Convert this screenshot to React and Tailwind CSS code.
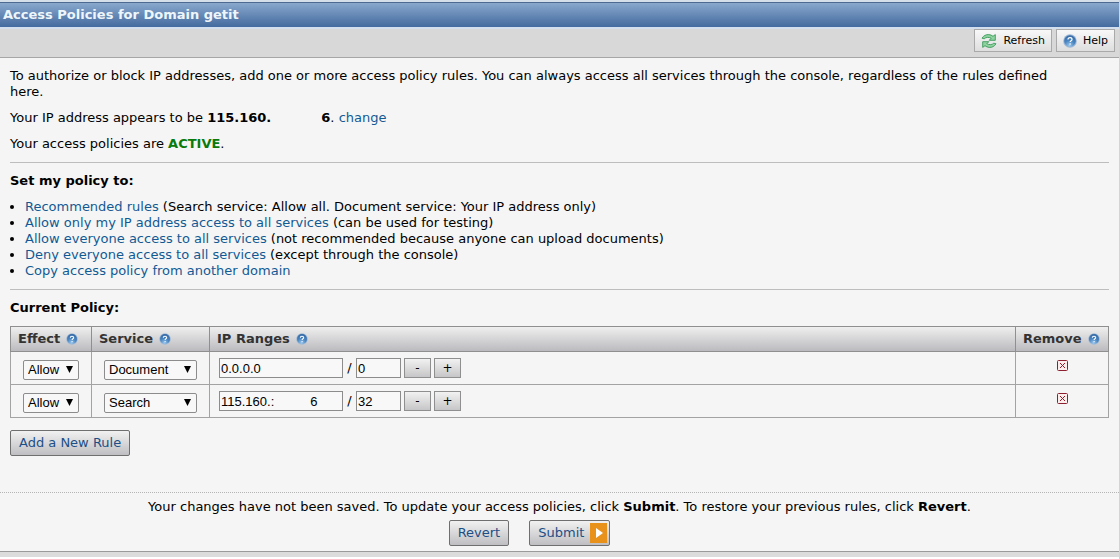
import React, { useId, useState } from 'react';

const policies = [
  { label: 'Recommended rules', note: '(Search service: Allow all. Document service: Your IP address only)' },
  { label: 'Allow only my IP address access to all services', note: '(can be used for testing)' },
  { label: 'Allow everyone access to all services', note: '(not recommended because anyone can upload documents)' },
  { label: 'Deny everyone access to all services', note: '(except through the console)' },
  { label: 'Copy access policy from another domain', note: '' },
];

const initialRules = [
  { id: 1, effect: 'Allow', service: 'Document', ip: '0.0.0.0', mask: '0' },
  { id: 2, effect: 'Allow', service: 'Search', ip: '115.160.:          6', mask: '32' },
];

function HelpIcon({ className }) {
  const id = useId();
  return (
    <svg viewBox="0 0 14 14" className={className} aria-hidden="true">
      <defs>
        <radialGradient id={id} cx="0.45" cy="0.9" r="0.9">
          <stop offset="0" stopColor="#9cc8ee" />
          <stop offset="0.5" stopColor="#4a86c2" />
          <stop offset="1" stopColor="#3568a3" />
        </radialGradient>
      </defs>
      <circle cx="7" cy="7" r="6.8" fill="#9fb9d6" />
      <circle cx="7" cy="7" r="5.8" fill={`url(#${id})`} />
      <path d="M5 5.6C5 4.4 5.9 3.7 7 3.7s2 .7 2 1.7c0 1.3-1.9 1.4-1.9 2.7" fill="none" stroke="#fff" strokeWidth="1.2" />
      <circle cx="7.1" cy="10" r="0.8" fill="#fff" />
    </svg>
  );
}

function RefreshIcon() {
  return (
    <svg viewBox="0 0 16 16" className="h-4 w-4" aria-hidden="true">
      <g fill="#8fd3a0" stroke="#3c9a5a" strokeWidth="0.9" strokeLinejoin="round">
        <path d="M1 5.200C2.600 2.600 5 1.400 7.800 1.600c1.600.1 3 .7 4.200 1.700L14.300 1.600v5.700H8.200l2-2C8 4 5 4 3.200 5.800z" />
        <path d="M15 10.800c-1.600 2.600-4 3.800-6.800 3.600-1.600-.1-3-.7-4.200-1.700L1.700 14.400V8.700h6.100l-2 2c2.200 1.300 5.200 1.300 7-.5z" />
      </g>
    </svg>
  );
}

function SelectBox({ label, value, options, className }) {
  return (
    <span className={`relative block ${className}`}>
      <select
        aria-label={label}
        defaultValue={value}
        className="block h-5 w-full appearance-none rounded-xs border border-[#8c8c8c] bg-[#f8f8f8] pl-1 font-['Liberation_Sans',Arial,sans-serif] text-[13px] leading-4 text-black"
      >
        {options.map((option) => (
          <option key={option}>{option}</option>
        ))}
      </select>
      <svg viewBox="0 0 7 7" className="pointer-events-none absolute top-1.5 right-1.5 h-[7px] w-[7px]" aria-hidden="true">
        <path d="M0 0h7L3.500 7z" fill="#000" />
      </svg>
    </span>
  );
}

function HeadCell({ children, className }) {
  return (
    <th scope="col" className={`h-[25px] border border-[#8f8f8f] px-[7px] text-left font-bold whitespace-nowrap text-[#333] ${className}`}>
      <span className="flex items-center gap-1.5">
        {children}
        <HelpIcon className="h-3 w-3" />
      </span>
    </th>
  );
}

const inputStyle =
  "h-5 border border-[#8c8c8c] bg-[#f8f8f8] px-px font-['Liberation_Sans',Arial,sans-serif] text-[13px] text-black";
const smallButton =
  'h-5 border border-[#8f8f8f] bg-linear-to-b from-[#f2f2f2] to-[#c6c6c8] text-xs leading-4 text-black';
const toolButton =
  'flex h-[23px] items-center border border-[#a9a9a9] bg-linear-to-b from-[#f8f8f8] to-[#dedede] text-[11px] text-black';
const bigButton =
  'flex h-[26px] items-center rounded-xs border border-[#6f6f6f] bg-linear-to-b from-[#f1f1f1] to-[#bfbfc3] text-[#1c4f86]';

function RuleRow({ rule, onRemove }) {
  return (
    <tr>
      <td className="h-[33px] border border-[#a3a3a3] px-3 pt-1">
        <SelectBox label="Effect" value={rule.effect} options={['Allow', 'Deny']} className="w-14" />
      </td>
      <td className="border border-[#a3a3a3] px-3 pt-1">
        <SelectBox label="Service" value={rule.service} options={['Document', 'Search']} className="w-[93px]" />
      </td>
      <td className="border border-[#a3a3a3] px-[9px]">
        <div className="flex items-center">
          <input type="text" aria-label="IP address" defaultValue={rule.ip} className={`w-[124px] ${inputStyle}`} />
          <span className="w-[13px] text-center">/</span>
          <input type="text" aria-label="Prefix length" defaultValue={rule.mask} className={`w-[45px] ${inputStyle}`} />
          <button type="button" className={`ml-[3px] w-[27px] ${smallButton}`}>-</button>
          <button type="button" className={`ml-[3px] w-[27px] ${smallButton}`}>+</button>
        </div>
      </td>
      <td className="border border-[#a3a3a3] pb-1.5">
        <button type="button" aria-label="Remove rule" onClick={onRemove} className="mx-auto block">
          <svg viewBox="0 0 11 11" className="h-[11px] w-[11px]">
            <rect x="0.5" y="0.5" width="10" height="10" rx="1" fill="#fdeeee" stroke="#8c2030" />
            <path d="M3 3l5 5M8 3l-5 5" stroke="#a01828" strokeWidth="1" />
          </svg>
        </button>
      </td>
    </tr>
  );
}

export default function App() {
  const [rules, setRules] = useState(initialRules);

  const addRule = () =>
    setRules([...rules, { id: Date.now(), effect: 'Allow', service: 'Document', ip: '', mask: '32' }]);

  return (
    <div className="bg-[#f5f5f5] font-['DejaVu_Sans',Verdana,sans-serif] text-[13px] leading-4 text-black">
      {/* Title bar */}
      <header className="border-t-2 border-[#d5dfe9]">
        <h1 className="flex h-[25px] items-center border-t border-[#4d6a92] bg-linear-to-b from-[#89a8cc] to-[#446b9f] px-[3px] font-bold text-[#eef6fb]">
          Access Policies for Domain getit
        </h1>
        <div className="flex items-center justify-end gap-1 border-t-2 border-b border-t-[#d3dfef] border-b-[#a6a6a6] bg-[#d8d8d8] px-1 pb-[5px]">
          <button type="button" className={`${toolButton} gap-1.5 px-1.5`}>
            <RefreshIcon />
            Refresh
          </button>
          <button type="button" className={`${toolButton} gap-1.5 px-1.5`}>
            <HelpIcon className="h-3.5 w-3.5" />
            Help
          </button>
        </div>
      </header>

      <main className="px-2.5 pt-2.5">
        <p className="pr-8">
          To authorize or block IP addresses, add one or more access policy rules. You can always access all services
          through the console, regardless of the rules defined here.
        </p>
        <p className="mt-2.5">
          Your IP address appears to be <b>115.160.<span className="inline-block w-[50px]" />6</b>.{' '}
          <a href="#change" className="text-[#125a94]">change</a>
        </p>
        <p className="mt-2.5">
          Your access policies are <b className="text-[#0a7a0a]">ACTIVE</b>.
        </p>

        <hr className="mt-2.5 border-[#bdbdbd]" />

        <h2 className="mt-2.5 font-bold">Set my policy to:</h2>
        <ul className="mt-2.5 list-disc pl-[15px]">
          {policies.map(({ label, note }) => (
            <li key={label}>
              <a href="#policy" className="text-[#125a94]">{label}</a> {note}
            </li>
          ))}
        </ul>

        <hr className="mt-2.5 border-[#bdbdbd]" />

        <h2 className="mt-2.5 font-bold">Current Policy:</h2>
        <table className="mt-2.5 w-full border-collapse">
          <thead>
            <tr className="bg-linear-to-b from-[#efefef] to-[#b9b9bd]">
              <HeadCell className="w-[81px]">Effect</HeadCell>
              <HeadCell className="w-[118px]">Service</HeadCell>
              <HeadCell className="w-auto">IP Ranges</HeadCell>
              <HeadCell className="w-[93px]">Remove</HeadCell>
            </tr>
          </thead>
          <tbody>
            {rules.map((rule) => (
              <RuleRow key={rule.id} rule={rule} onRemove={() => setRules(rules.filter((r) => r.id !== rule.id))} />
            ))}
          </tbody>
        </table>

        <button type="button" onClick={addRule} className={`mt-3 px-2 ${bigButton}`}>
          Add a New Rule
        </button>
      </main>

      {/* Save / revert bar */}
      <footer className="mt-9 border-t border-b border-t-[#b5b5b5] border-b-[#9a9a9a] pt-1.5 pb-[5px] [border-top-style:dotted]">
        <p className="text-center">
          Your changes have not been saved. To update your access policies, click <b>Submit</b>. To restore your
          previous rules, click <b>Revert</b>.
        </p>
        <div className="mt-[5px] flex justify-center gap-5 pr-15">
          <button type="button" className={`px-2 ${bigButton}`}>Revert</button>
          <button type="button" className={`gap-1.5 pr-0.5 pl-2 ${bigButton}`}>
            Submit
            <svg viewBox="0 0 17 20" className="h-5 w-[17px]" aria-hidden="true">
              <path d="M0 0h17v20H0z" fill="#e8921c" />
              <path d="M6 5l7 5-7 5z" fill="#fff" />
            </svg>
          </button>
        </div>
      </footer>
      <div className="h-[5px] bg-[#dcdcdc]" />
    </div>
  );
}
